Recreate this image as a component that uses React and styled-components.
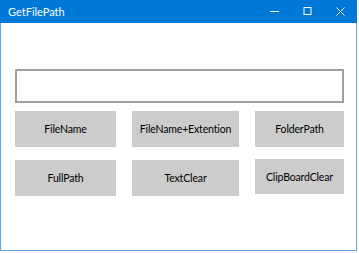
import React from 'react';
import styled, { createGlobalStyle } from 'styled-components';

const GlobalStyle = createGlobalStyle`
  html, body {
    margin: 0;
    padding: 0;
    background: #ffffff;
  }
  body {
    font-family: 'Lato', 'Noto Sans', sans-serif;
  }
`;

const buttons = [
  [
    { label: 'FileName' },
    { label: 'FileName+Extention' },
    { label: 'FolderPath' }
  ],
  [
    { label: 'FullPath' },
    { label: 'TextClear' },
    { label: 'ClipBoardClear', lift: true }
  ]
];

const App = () => {
  return (
    <>
      <GlobalStyle />
      <Window>
        <TitleBar>
          <Title>GetFilePath</Title>
          <Controls>
            <ControlButton aria-label="minimize">
              <svg width="9" height="9" viewBox="0 0 9 9">
                <line x1="0" y1="4.5" x2="9" y2="4.5" stroke="#fff" strokeWidth="1" />
              </svg>
            </ControlButton>
            <ControlButton aria-label="maximize">
              <svg width="9" height="9" viewBox="0 0 9 9">
                <rect x="1" y="0.5" width="7" height="7" fill="none" stroke="#fff" strokeWidth="1" />
              </svg>
            </ControlButton>
            <ControlButton aria-label="close">
              <svg width="9" height="9" viewBox="0 0 9 9">
                <path d="M0.5 0.5 L8.5 8.5 M8.5 0.5 L0.5 8.5" stroke="#fff" strokeWidth="1" />
              </svg>
            </ControlButton>
          </Controls>
        </TitleBar>

        <Body>
          <PathBox />
          {buttons.map((row, i) => (
            <ButtonRow key={i} first={i === 0}>
              {row.map(b => (
                <ActionButton key={b.label} lift={b.lift}>
                  {b.label}
                </ActionButton>
              ))}
            </ButtonRow>
          ))}
        </Body>
      </Window>
    </>
  );
};

const Window = styled.div`
  width: 357px;
  height: 251px;
  box-sizing: border-box;
  border: 1px solid #5aa8e8;
  border-top: none;
  display: flex;
  flex-direction: column;
  background: #ffffff;
`;

const TitleBar = styled.div`
  height: 23px;
  margin: 0 -1px;
  background: #0078d7;
  display: flex;
  align-items: center;
  justify-content: space-between;
  color: #ffffff;
`;

const Title = styled.span`
  font-size: 11px;
  padding-left: 8px;
  line-height: 23px;
`;

const Controls = styled.div`
  display: flex;
  height: 100%;
`;

const ControlButton = styled.div`
  width: 33px;
  height: 100%;
  display: flex;
  align-items: center;
  justify-content: center;
`;

const Body = styled.div`
  display: flex;
  flex-direction: column;
  padding: 46px 0 0 14px;
`;

const PathBox = styled.div`
  width: 329px;
  height: 34px;
  box-sizing: border-box;
  border: 2px solid #a0a0a0;
  background: #ffffff;
`;

const ButtonRow = styled.div`
  width: 329px;
  display: grid;
  grid-template-columns: 101px 107px 89px;
  justify-content: space-between;
  align-items: start;
  margin-top: ${p => (p.first ? '8px' : '13px')};
`;

const ActionButton = styled.div`
  height: ${p => (p.lift ? '35px' : '36px')};
  margin-top: ${p => (p.lift ? '-1px' : '0')};
  background: #cccccc;
  display: flex;
  align-items: center;
  justify-content: center;
  font-size: 10.5px;
  letter-spacing: -0.15px;
  color: #000000;
`;

export default App;
